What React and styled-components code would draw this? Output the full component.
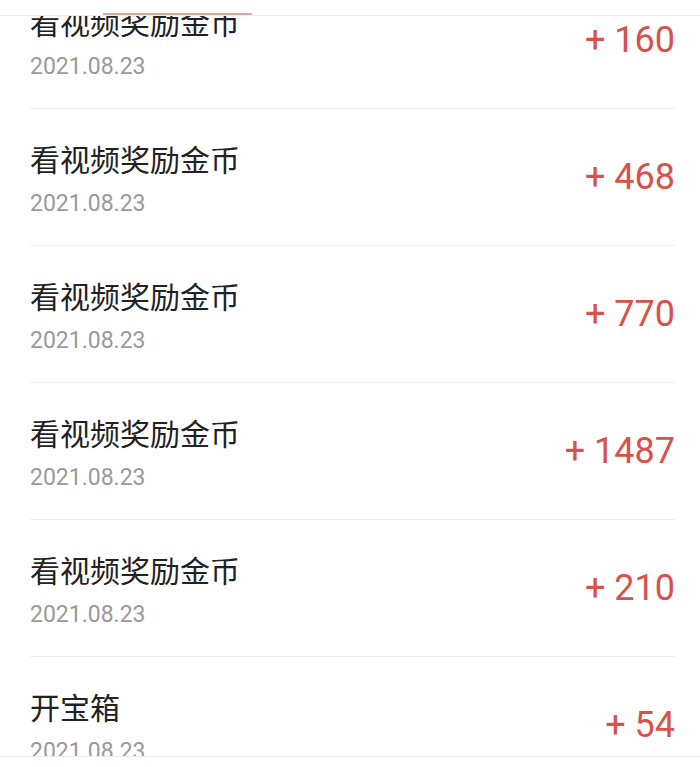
import { useLayoutEffect, useRef } from 'react';
import styled, { createGlobalStyle } from 'styled-components';

const records = [
  { title: '看视频奖励金币', date: '2021.08.23', amount: 160 },
  { title: '看视频奖励金币', date: '2021.08.23', amount: 468 },
  { title: '看视频奖励金币', date: '2021.08.23', amount: 770 },
  { title: '看视频奖励金币', date: '2021.08.23', amount: 1487 },
  { title: '看视频奖励金币', date: '2021.08.23', amount: 210 },
  { title: '开宝箱', date: '2021.08.23', amount: 54 },
];

export default function App() {
  const listRef = useRef(null);

  // the list is shown scrolled a little past the top
  useLayoutEffect(() => {
    if (listRef.current) listRef.current.scrollTop = 44;
  }, []);

  return (
    <>
      <GlobalStyle />
      <Screen>
        <TabBar>
          <TabIndicator />
        </TabBar>
        <ListViewport ref={listRef}>
          {records.map((r, i) => (
            <Record key={i}>
              <Info>
                <Title>{r.title}</Title>
                <DateText>{r.date}</DateText>
              </Info>
              <Amount>+ {r.amount}</Amount>
            </Record>
          ))}
        </ListViewport>
        <BottomBar />
      </Screen>
    </>
  );
}

const GlobalStyle = createGlobalStyle`
  html, body {
    margin: 0;
    padding: 0;
    background: #fff;
  }
  body {
    font-family: Roboto, 'Noto Sans CJK SC', sans-serif;
  }
`;

const Screen = styled.div`
  display: flex;
  flex-direction: column;
  height: 767px;
  overflow: hidden;
  background: #fff;
`;

const TabBar = styled.div`
  flex-shrink: 0;
  height: 15px;
  display: flex;
  align-items: flex-end;
  padding-left: 103px;
  border-bottom: 1px solid #eeeeee;
`;

const TabIndicator = styled.div`
  width: 149px;
  height: 2px;
  background: #dba69c;
`;

const ListViewport = styled.div`
  flex: 1;
  overflow-y: auto;
  scrollbar-width: none;
  &::-webkit-scrollbar {
    display: none;
  }
`;

const Record = styled.div`
  display: flex;
  justify-content: space-between;
  align-items: center;
  box-sizing: border-box;
  height: 137px;
  margin: 0 25px 0 30px;
  border-bottom: 1px solid #eeeeee;
`;

const Info = styled.div`
  display: flex;
  flex-direction: column;
  align-self: flex-start;
  padding-top: 29px;
`;

const Title = styled.div`
  font-family: 'Noto Sans CJK SC', sans-serif;
  font-size: 30px;
  line-height: 40px;
  color: #222;
`;

const DateText = styled.div`
  font-family: Roboto, sans-serif;
  font-size: 23px;
  line-height: 30px;
  margin-top: 11px;
  color: #9a9a9a;
`;

const Amount = styled.div`
  font-family: Roboto, sans-serif;
  font-size: 36px;
  line-height: 44px;
  color: #d8514b;
  white-space: nowrap;
`;

const BottomBar = styled.div`
  flex-shrink: 0;
  height: 10px;
  border-top: 1px solid #eeeeee;
  background: #fff;
`;
